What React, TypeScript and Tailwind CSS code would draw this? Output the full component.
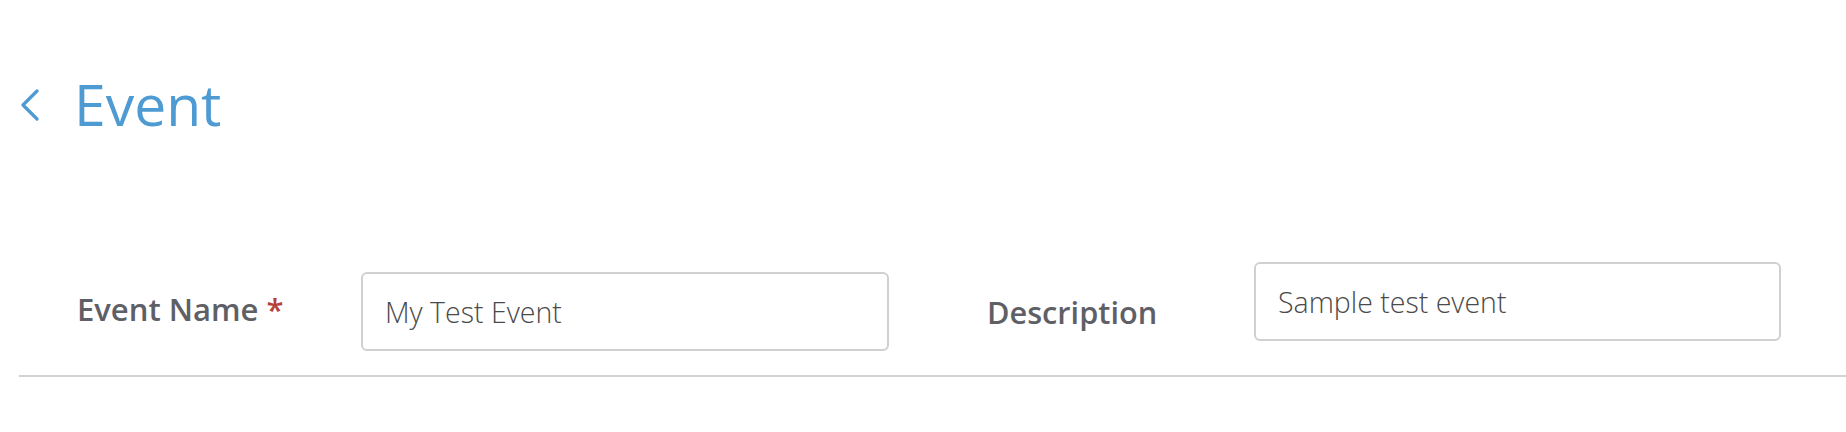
export default function App() {
  return (
    <main className="w-[1846px] h-[432px] bg-white font-['Open_Sans',sans-serif] overflow-hidden">
      <div className="flex items-center pt-[75px] h-[134px]">
        <button className="ml-[20px] w-[20px] flex justify-center text-[#4e9ad2]">
          <svg width="20" height="32" viewBox="0 0 20 32" fill="none">
            <polyline
              points="17,2 3,16 17,30"
              stroke="currentColor"
              strokeWidth="3.2"
              strokeLinecap="round"
              strokeLinejoin="round"
            />
          </svg>
        </button>
        <h1 className="ml-[34px] text-[57px] leading-none font-normal text-[#4e9ad2]">
          Event
        </h1>
      </div>

      <div className="ml-[19px] mt-[128px] pb-[24px] flex items-start border-b-2 border-[#d2d2d2]">
        {/* left column */}
        <div className="flex items-start pl-[58px]">
          <label className="w-[284px] mt-[32px] text-[31px] leading-none font-semibold text-[#5f6066]">
            Event Name<span className="ml-[8px] text-[#b8403b]">*</span>
          </label>
          <input
            readOnly
            defaultValue="My Test Event"
            className="mt-[10px] w-[528px] h-[79px] rounded-[6px] border-2 border-[#d0d0d0] px-[22px] text-[28.5px] font-light text-[#4a4a4a] outline-none"
          />
        </div>

        {/* right column */}
        <div className="flex items-start ml-[98px]">
          <label className="w-[267px] mt-[35px] text-[30.7px] leading-none font-semibold text-[#5f6066]">
            Description
          </label>
          <input
            readOnly
            defaultValue="Sample test event"
            className="w-[527px] h-[79px] rounded-[6px] border-2 border-[#d0d0d0] px-[22px] text-[28.5px] font-light text-[#4a4a4a] outline-none"
          />
        </div>
      </div>
    </main>
  );
}
